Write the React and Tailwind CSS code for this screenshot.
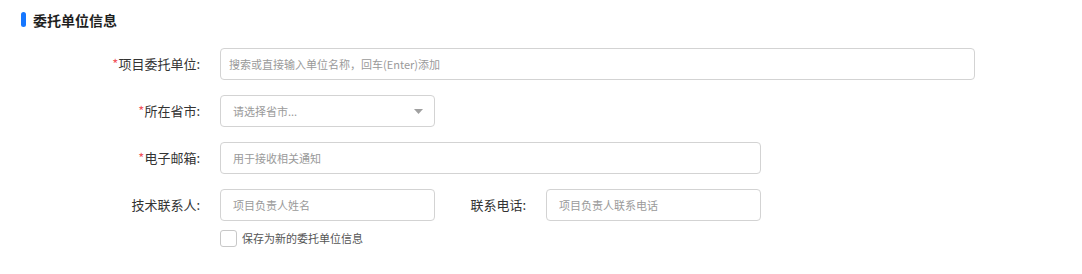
import React from "react";

const font = { fontFamily: '"Noto Sans CJK SC", "Noto Sans", sans-serif' };

function Label({ required, children, w = "w-[220px]" }) {
  return (
    <div className={`${w} shrink-0 flex justify-end pr-5 text-[13px] leading-[32px] text-[#333]`}>
      {required && <span className="text-[#f2545b]">*</span>}
      <span>{children}</span>
    </div>
  );
}

function TextInput({ placeholder, w, pl = "pl-3" }) {
  return (
    <input
      className={`${w} h-[32px] border border-[#d3d3d3] rounded-[4px] ${pl} text-[11px] text-[#333] placeholder:text-[#9a9a9a] outline-none bg-white`}
      placeholder={placeholder}
      style={font}
    />
  );
}

export default function App() {
  return (
    <div className="w-[1082px] h-[274px] bg-white" style={font}>
      <div className="h-[48px] pl-[21px] pt-[12px] flex items-start gap-[7px]">
        <div className="w-[5px] h-[15px] rounded-full bg-[#1677ff]" />
        <div className="text-[14px] leading-[16px] font-bold text-[#1f1f1f]">委托单位信息</div>
      </div>
      <div className="flex flex-col gap-[15px]">
        <div className="flex items-center">
          <Label required>项目委托单位:</Label>
          <TextInput w="w-[755px]" pl="pl-2" placeholder="搜索或直接输入单位名称，回车(Enter)添加" />
        </div>
        <div className="flex items-center">
          <Label required>所在省市:</Label>
          <div className="relative w-[215px] h-[32px] border border-[#d3d3d3] rounded-[4px] flex items-center pl-3 text-[11px] text-[#9a9a9a]">
            <span>请选择省市...</span>
            <svg className="absolute right-[11px] top-[13px]" width="9" height="5" viewBox="0 0 9 5">
              <path d="M0 0 L9 0 L4.5 5 Z" fill="#a0a0a0" />
            </svg>
          </div>
        </div>
        <div className="flex items-center">
          <Label required>电子邮箱:</Label>
          <TextInput w="w-[541px]" placeholder="用于接收相关通知" />
        </div>
        <div className="flex items-center">
          <Label>技术联系人:</Label>
          <TextInput w="w-[215px]" placeholder="项目负责人姓名" />
          <Label w="w-[111px]">联系电话:</Label>
          <TextInput w="w-[215px]" placeholder="项目负责人联系电话" />
        </div>
      </div>
      <div className="mt-[9px] pl-[220px] flex items-center gap-[5px]">
        <div className="w-[17px] h-[17px] border border-[#c8c8c8] rounded-[3px] bg-white" />
        <span className="text-[11px] text-[#555] leading-[17px]">保存为新的委托单位信息</span>
      </div>
    </div>
  );
}
